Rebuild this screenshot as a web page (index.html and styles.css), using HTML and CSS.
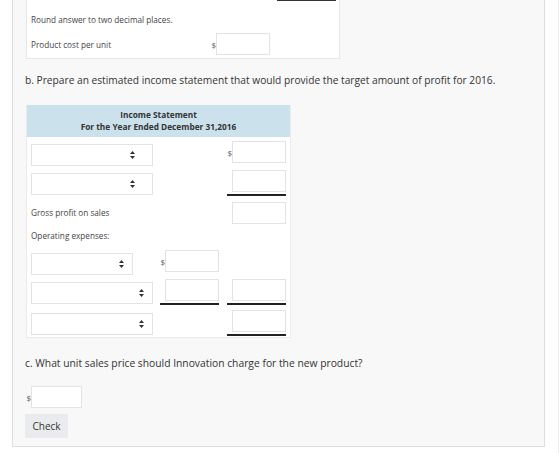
FILE: index.html
```html
<!DOCTYPE html>
<html lang="en">
<head>
  <meta charset="UTF-8">
  <meta name="viewport" content="width=device-width, initial-scale=1.0">
  <title>Income Statement Problem</title>
  <link rel="stylesheet" href="styles.css">
</head>
<body>
  <div class="page">
    <div class="question">

      <div class="panel">
        <div class="carry"><span class="carry-line"></span></div>
        <p class="note">Round answer to two decimal places.</p>
        <div class="field-row">
          <span class="field-label">Product cost per unit</span>
          <span class="sign">$</span><input class="amount" type="text">
        </div>
      </div>

      <p class="part">b. Prepare an estimated income statement that would provide the target amount of profit for 2016.</p>

      <div class="statement">
        <div class="statement-head">
          Income Statement<br>
          For the Year Ended December 31,2016
        </div>
        <div class="statement-body">
          <div class="line">
            <div class="col-name"><select class="pick pick-inset"><option></option></select></div>
            <div class="cell cell-blank"></div>
            <div class="cell"><span class="sign">$</span><input class="amount" type="text"></div>
          </div>
          <div class="line line-tight">
            <div class="col-name"><select class="pick pick-inset"><option></option></select></div>
            <div class="cell cell-blank"></div>
            <div class="cell total"><span class="sign"></span><input class="amount" type="text"></div>
          </div>
          <div class="line line-gross">
            <div class="col-name"><span class="row-label">Gross profit on sales</span></div>
            <div class="cell cell-blank"></div>
            <div class="cell"><span class="sign"></span><input class="amount" type="text"></div>
          </div>
          <div class="heading">Operating expenses:</div>
          <div class="line line-after-heading">
            <div class="col-name"><select class="pick pick-short"><option></option></select></div>
            <div class="cell"><span class="sign">$</span><input class="amount" type="text"></div>
            <div class="cell cell-blank"></div>
          </div>
          <div class="line line-tight">
            <div class="col-name"><select class="pick"><option></option></select></div>
            <div class="cell total"><span class="sign"></span><input class="amount" type="text"></div>
            <div class="cell total"><span class="sign"></span><input class="amount" type="text"></div>
          </div>
          <div class="line line-last">
            <div class="col-name"><select class="pick"><option></option></select></div>
            <div class="cell cell-blank"></div>
            <div class="cell total"><span class="sign"></span><input class="amount" type="text"></div>
          </div>
        </div>
      </div>

      <p class="part part-c">c. What unit sales price should Innovation charge for the new product?</p>

      <div class="answer">
        <span class="sign">$</span><input class="amount amount-wide" type="text">
      </div>

      <button class="check">Check</button>
    </div>
  </div>
</body>
</html>
```

FILE: styles.css
```css
body {
  margin: 0;
  font-family: "Open Sans", "Liberation Sans", Arial, sans-serif;
  color: #333;
  background: #fff;
  overflow: hidden;
}

p {
  margin: 0;
}

.page {
  display: flow-root;
  width: 558px;
  height: 453px;
  border-right: 1px solid #ececec;
}

.question {
  width: 533px;
  box-sizing: border-box;
  margin: -20px 0 0 12px;
  padding: 0 12px 8px;
  background: #f8f8f8;
  border: 1px solid #dedede;
  border-top: none;
}

/* white answer box carried over from part a */
.panel {
  width: 314px;
  box-sizing: border-box;
  margin-left: 1px;
  padding: 0 3px 3px 4px;
  background: #fff;
  border: 1px solid #e6e6e6;
  border-top: none;
}

.carry {
  display: flex;
  justify-content: flex-end;
  height: 21px;
  align-items: flex-end;
}

.carry-line {
  width: 59px;
  border-bottom: 2px solid #333;
}

.note {
  margin-top: 13px;
  font-size: 8.2px;
  line-height: 12px;
  color: #444;
}

.field-row {
  display: flex;
  align-items: center;
  margin-top: 7px;
}

.field-label {
  width: 180px;
  font-size: 8.2px;
  color: #444;
}

.sign {
  width: 5px;
  font-size: 8px;
  color: #555;
  text-align: right;
}

.amount {
  width: 54px;
  height: 22px;
  box-sizing: border-box;
  margin: 0;
  padding: 2px 4px;
  border: 1px solid #e1e3e6;
  background: #fff;
  font-family: inherit;
  font-size: 9px;
  outline: none;
}

.part {
  margin: 13px 0 17px;
  font-size: 10.2px;
  line-height: 16px;
  color: #333;
}

/* income statement table */
.statement {
  width: 265px;
  box-sizing: border-box;
  margin-left: 1px;
  background: #fff;
  border: 1px solid #ebebeb;
  border-top: none;
}

.statement-head {
  padding: 4px 0;
  background: #cbe2ed;
  text-align: center;
  font-size: 8.3px;
  font-weight: bold;
  line-height: 12px;
  color: #333;
}

.statement-body {
  padding: 4px 4px 1px;
}

.line {
  display: flex;
  align-items: flex-start;
}

.line-tight {
  margin-top: 3px;
}

.line-gross {
  margin-top: 6px;
}

.line-after-heading {
  margin-top: 7px;
}

.line-last {
  margin-top: 5px;
}

.col-name {
  width: 129px;
  flex-shrink: 0;
}

.row-label {
  display: block;
  font-size: 8.2px;
  line-height: 22px;
  color: #444;
}

.heading {
  margin-top: 1px;
  font-size: 8.2px;
  line-height: 14px;
  color: #444;
}

.cell {
  display: flex;
  align-items: center;
  width: 59px;
  padding-bottom: 2px;
  border-bottom: 2px solid transparent;
}

.cell + .cell {
  margin-left: 8px;
}

.cell-blank {
  height: 22px;
}

.cell.total {
  border-bottom-color: #222;
}

.pick {
  width: 122px;
  height: 22px;
  box-sizing: border-box;
  margin: 0;
  border: 1px solid #e1e3e6;
  border-radius: 0;
  background: #fff url("data:image/svg+xml,%3Csvg xmlns='http://www.w3.org/2000/svg' width='5' height='8' viewBox='0 0 5 8'%3E%3Cpath d='M2.5 0L5 3H0z M2.5 8L0 5h5z' fill='%23333'/%3E%3C/svg%3E") no-repeat right 8px center;
  -webkit-appearance: none;
  appearance: none;
  font-family: inherit;
  font-size: 9px;
  outline: none;
}

.pick-inset {
  background-position: right 17px center;
}

.pick-short {
  width: 102px;
}

.part-c {
  margin: 17px 0 0;
  font-size: 10.3px;
}

.answer {
  display: flex;
  align-items: center;
  margin-top: 15px;
  margin-left: 1px;
}

.answer .sign {
  width: 5px;
}

.amount-wide {
  width: 51px;
}

.check {
  display: block;
  width: 43px;
  height: 24px;
  margin-top: 6px;
  padding: 0;
  border: none;
  background: #e9ebee;
  color: #333;
  font-family: inherit;
  font-size: 10px;
  cursor: pointer;
}
```
